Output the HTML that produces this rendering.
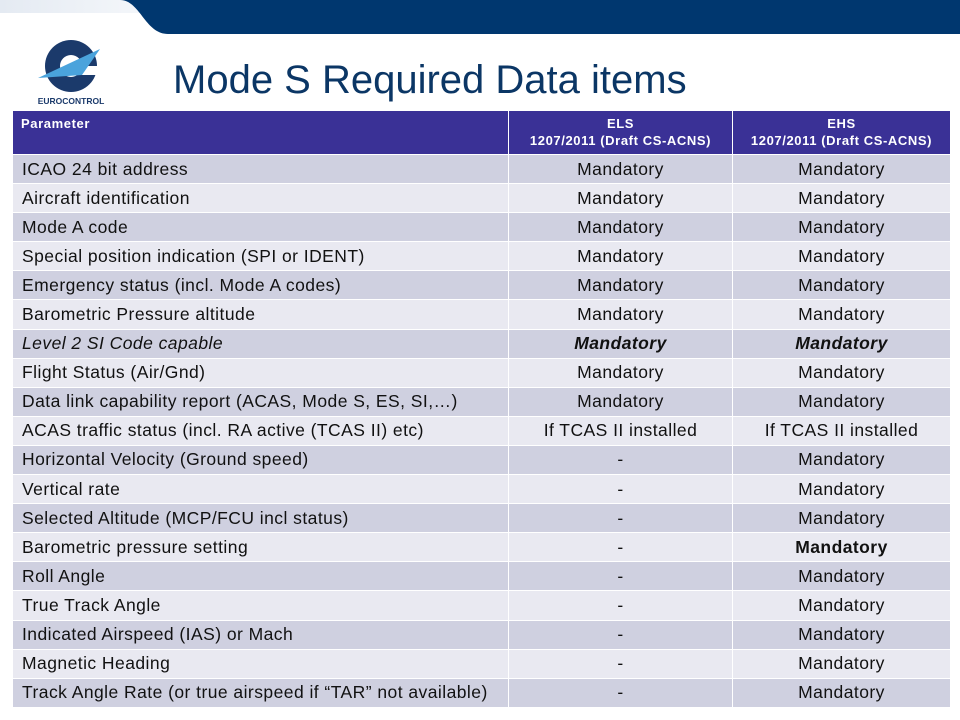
<!DOCTYPE html>
<html><head><meta charset="utf-8"><style>
body{margin:0;width:960px;height:720px;background:#fff;position:relative;overflow:hidden;font-family:"Liberation Sans",Arial,sans-serif}
h1{position:absolute;left:173px;top:58px;margin:0;font-weight:normal;font-size:40px;color:#0b3665;letter-spacing:0}
table{position:absolute;left:12px;top:110px;width:938px;border-collapse:collapse;table-layout:fixed}
th{background:#3a3196;color:#fff;font-size:13px;letter-spacing:0.6px;font-weight:bold;height:44px;border:1px solid #fff;padding:0;vertical-align:top;line-height:17px;padding-top:4px;box-sizing:border-box}
th:first-child{text-align:left;padding-left:8px}
td{height:29.1px;font-size:17.5px;letter-spacing:0.45px;color:#111;border:1px solid #fff;padding:0;box-sizing:border-box;text-align:center;white-space:nowrap}
td:first-child{text-align:left;padding-left:9px}
tr:nth-child(even) td{background:#cfd0e0}
tr:nth-child(odd) td{background:#e9e9f1}
.b{font-weight:bold}.bi td{font-style:italic}
</style></head><body>
<svg width="960" height="40" style="position:absolute;left:0;top:0">
<defs><linearGradient id="g" x1="0" x2="1"><stop offset="0" stop-color="#e4eaf2"/><stop offset="1" stop-color="#f6f8fb"/></linearGradient></defs>
<rect x="0" y="0" width="160" height="13" fill="url(#g)"/>
<path d="M120 0 C140 0,145 34,168 34 L960 34 L960 0 Z" fill="#00376f"/>
</svg>
<svg width="80" height="80" style="position:absolute;left:30px;top:30px" viewBox="0 0 80 80">
<circle cx="41" cy="36" r="26" fill="#1b3a6b"/>
<circle cx="41" cy="36" r="11" fill="#fff"/>
<rect x="41" y="36" width="28" height="9" fill="#fff"/>
<path d="M8 48 L70 19 L52 45 Z" fill="#4aa3dc"/>
<text x="41" y="74" font-size="8.5" font-weight="bold" fill="#1b3a6b" text-anchor="middle" font-family="Liberation Sans">EUROCONTROL</text>
</svg>
<h1>Mode S Required Data items</h1>
<table>
<colgroup><col style="width:496px"><col style="width:224px"><col style="width:218px"></colgroup>
<tr><th>Parameter</th><th>ELS<br>1207/2011 (Draft CS-ACNS)</th><th>EHS<br>1207/2011 (Draft CS-ACNS)</th></tr>
<tr><td>ICAO 24 bit address</td><td>Mandatory</td><td>Mandatory</td></tr>
<tr><td>Aircraft identification</td><td>Mandatory</td><td>Mandatory</td></tr>
<tr><td>Mode A code</td><td>Mandatory</td><td>Mandatory</td></tr>
<tr><td>Special position indication (SPI or IDENT)</td><td>Mandatory</td><td>Mandatory</td></tr>
<tr><td>Emergency status (incl. Mode A codes)</td><td>Mandatory</td><td>Mandatory</td></tr>
<tr><td>Barometric Pressure altitude</td><td>Mandatory</td><td>Mandatory</td></tr>
<tr class="bi"><td>Level 2 SI Code capable</td><td class="b">Mandatory</td><td class="b">Mandatory</td></tr>
<tr><td>Flight Status (Air/Gnd)</td><td>Mandatory</td><td>Mandatory</td></tr>
<tr><td>Data link capability report (ACAS, Mode S, ES, SI,…)</td><td>Mandatory</td><td>Mandatory</td></tr>
<tr><td>ACAS traffic status (incl. RA active (TCAS II) etc)</td><td>If TCAS II installed</td><td>If TCAS II installed</td></tr>
<tr><td>Horizontal Velocity (Ground speed)</td><td>-</td><td>Mandatory</td></tr>
<tr><td>Vertical rate</td><td>-</td><td>Mandatory</td></tr>
<tr><td>Selected Altitude (MCP/FCU incl status)</td><td>-</td><td>Mandatory</td></tr>
<tr><td>Barometric pressure setting</td><td>-</td><td class="b">Mandatory</td></tr>
<tr><td>Roll Angle</td><td>-</td><td>Mandatory</td></tr>
<tr><td>True Track Angle</td><td>-</td><td>Mandatory</td></tr>
<tr><td>Indicated Airspeed (IAS) or Mach</td><td>-</td><td>Mandatory</td></tr>
<tr><td>Magnetic Heading</td><td>-</td><td>Mandatory</td></tr>
<tr><td>Track Angle Rate (or true airspeed if “TAR” not available)</td><td>-</td><td>Mandatory</td></tr>
</table>
</body></html>
